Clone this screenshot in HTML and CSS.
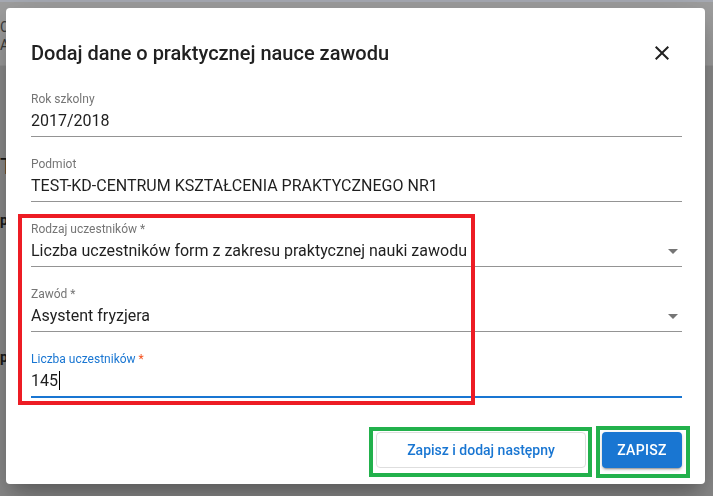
FILE: index.html
```html
<!DOCTYPE html>
<html lang="pl">
<head>
<meta charset="utf-8">
<title>Dodaj dane o praktycznej nauce zawodu</title>
<link rel="stylesheet" href="styles.css">
</head>
<body>
<div class="page">
  <div class="topline"></div>
  <header class="page-header">
    <div class="ph-line">C</div>
    <div class="ph-line">A</div>
  </header>
  <main class="page-main">
    <div class="pm-title">T</div>
    <div class="pm-bold pm-first">pa</div>
    <div class="pm-bold pm-second">pa</div>
  </main>
</div>

<div class="overlay">
  <div class="dialog">
    <div class="dialog-header">
      <h2 class="dialog-title">Dodaj dane o praktycznej nauce zawodu</h2>
      <button class="close-btn" type="button" aria-label="Zamknij">
        <svg viewBox="0 0 24 24" width="24" height="24"><path d="M19 6.41L17.59 5 12 10.59 6.41 5 5 6.41 10.59 12 5 17.59 6.41 19 12 13.41 17.59 19 19 17.59 13.41 12z"/></svg>
      </button>
    </div>

    <div class="field">
      <div class="field-label">Rok szkolny</div>
      <div class="field-value">2017/2018</div>
    </div>
    <div class="field">
      <div class="field-label">Podmiot</div>
      <div class="field-value">TEST-KD-CENTRUM KSZTAŁCENIA PRAKTYCZNEGO NR1</div>
    </div>
    <div class="field">
      <div class="field-label">Rodzaj uczestników *</div>
      <div class="field-value select"><span>Liczba uczestników form z zakresu praktycznej nauki zawodu</span><span class="arrow"></span></div>
    </div>
    <div class="field">
      <div class="field-label">Zawód *</div>
      <div class="field-value select"><span>Asystent fryzjera</span><span class="arrow"></span></div>
    </div>
    <div class="field focused">
      <div class="field-label">Liczba uczestników <span class="req">*</span></div>
      <div class="field-value">145<span class="caret"></span></div>
    </div>

    <div class="actions">
      <button class="btn btn-outline" type="button">Zapisz i dodaj następny</button>
      <button class="btn btn-primary" type="button">ZAPISZ</button>
    </div>

    <div class="anno anno-red"></div>
    <div class="anno anno-green anno-g1"></div>
    <div class="anno anno-green anno-g2"></div>
  </div>
</div>
</body>
</html>
```

FILE: styles.css
```css
* { box-sizing: border-box; }

html, body {
  margin: 0;
  padding: 0;
  width: 713px;
  height: 496px;
  overflow: hidden;
  font-family: Roboto, "Noto Sans", "Liberation Sans", sans-serif;
  background: #8d8d8d;
}

.page {
  width: 713px;
  height: 496px;
  display: flex;
  flex-direction: column;
}

.topline {
  height: 2px;
  background: #a9adb6;
}

.page-header {
  height: 64px;
  background: #a0a0a0;
  border-bottom: 1px solid #989898;
  padding: 17px 0 0 0;
  display: flex;
  flex-direction: column;
  gap: 2px;
}

.ph-line {
  font-size: 14px;
  line-height: 16px;
  color: #3c3c3c;
}

.page-main {
  flex: 1;
  background: #8e8e8e;
  padding-top: 88px;
}

.pm-title {
  font-size: 22px;
  line-height: 26px;
  color: #151515;
}

.pm-bold {
  font-size: 14px;
  line-height: 16px;
  font-weight: 700;
  color: #1a1a1a;
}

.pm-first { margin-top: 32px; }
.pm-second { margin-top: 121px; }

.overlay {
  position: fixed;
  inset: 0;
  display: flex;
  align-items: flex-start;
  justify-content: flex-start;
  padding: 8px 0 0 6px;
}

.dialog {
  position: relative;
  width: 699px;
  background: #fff;
  border-radius: 4px;
  padding: 25px 23px 16px 25px;
  box-shadow: 0 11px 15px -7px rgba(0,0,0,.2), 0 24px 38px 3px rgba(0,0,0,.14), 0 9px 46px 8px rgba(0,0,0,.12);
}

.dialog-header {
  display: flex;
  align-items: center;
  justify-content: space-between;
  height: 40px;
}

.dialog-title {
  margin: 0;
  font-size: 20px;
  line-height: 32px;
  font-weight: 500;
  color: #212121;
}

.close-btn {
  width: 40px;
  height: 40px;
  padding: 0;
  border: 0;
  background: transparent;
  display: flex;
  align-items: center;
  justify-content: center;
}

.close-btn svg { fill: #212121; }

.field {
  margin-top: 19px;
  border-bottom: 1px solid #949494;
}

.dialog-header + .field { margin-top: 18px; }

.field-label {
  font-size: 12px;
  line-height: 16px;
  color: #757575;
  margin-bottom: 2px;
}

.field-value {
  font-size: 16px;
  line-height: 24px;
  color: #1f1f1f;
  padding-bottom: 3px;
}

.select {
  display: flex;
  align-items: center;
  justify-content: space-between;
}

.arrow {
  width: 0;
  height: 0;
  border-left: 5px solid transparent;
  border-right: 5px solid transparent;
  border-top: 5px solid #757575;
  margin-right: 4px;
}

.focused {
  border-bottom: 2px solid #1976d2;
}

.focused .field-label { color: #1976d2; }

.req { color: #f4511e; }

.caret {
  display: inline-block;
  width: 1px;
  height: 19px;
  background: #000;
  vertical-align: -4px;
  margin-left: 1px;
}

.actions {
  margin-top: 34px;
  display: flex;
  justify-content: flex-end;
  gap: 16px;
}

.btn {
  height: 36px;
  border-radius: 4px;
  font-family: Roboto, "Noto Sans", "Liberation Sans", sans-serif;
  font-size: 14px;
  font-weight: 500;
  padding: 0;
  cursor: pointer;
}

.btn-outline {
  width: 210px;
  background: #fff;
  border: 1px solid #dedede;
  color: #1976d2;
}

.btn-primary {
  width: 80px;
  background: #1976d2;
  border: 0;
  color: #fff;
  letter-spacing: .3px;
  box-shadow: 0 3px 1px -2px rgba(0,0,0,.2), 0 2px 2px 0 rgba(0,0,0,.14), 0 1px 5px 0 rgba(0,0,0,.12);
}

.anno {
  position: absolute;
  border-style: solid;
  border-width: 4px;
  pointer-events: none;
}

.anno-red {
  border-color: #ed1c24;
  left: 12px;
  top: 206px;
  width: 457px;
  height: 191px;
}

.anno-green { border-color: #22b14c; }

.anno-g1 {
  left: 363px;
  top: 419px;
  width: 223px;
  height: 50px;
}

.anno-g2 {
  left: 590px;
  top: 418px;
  width: 94px;
  height: 52px;
}
```
